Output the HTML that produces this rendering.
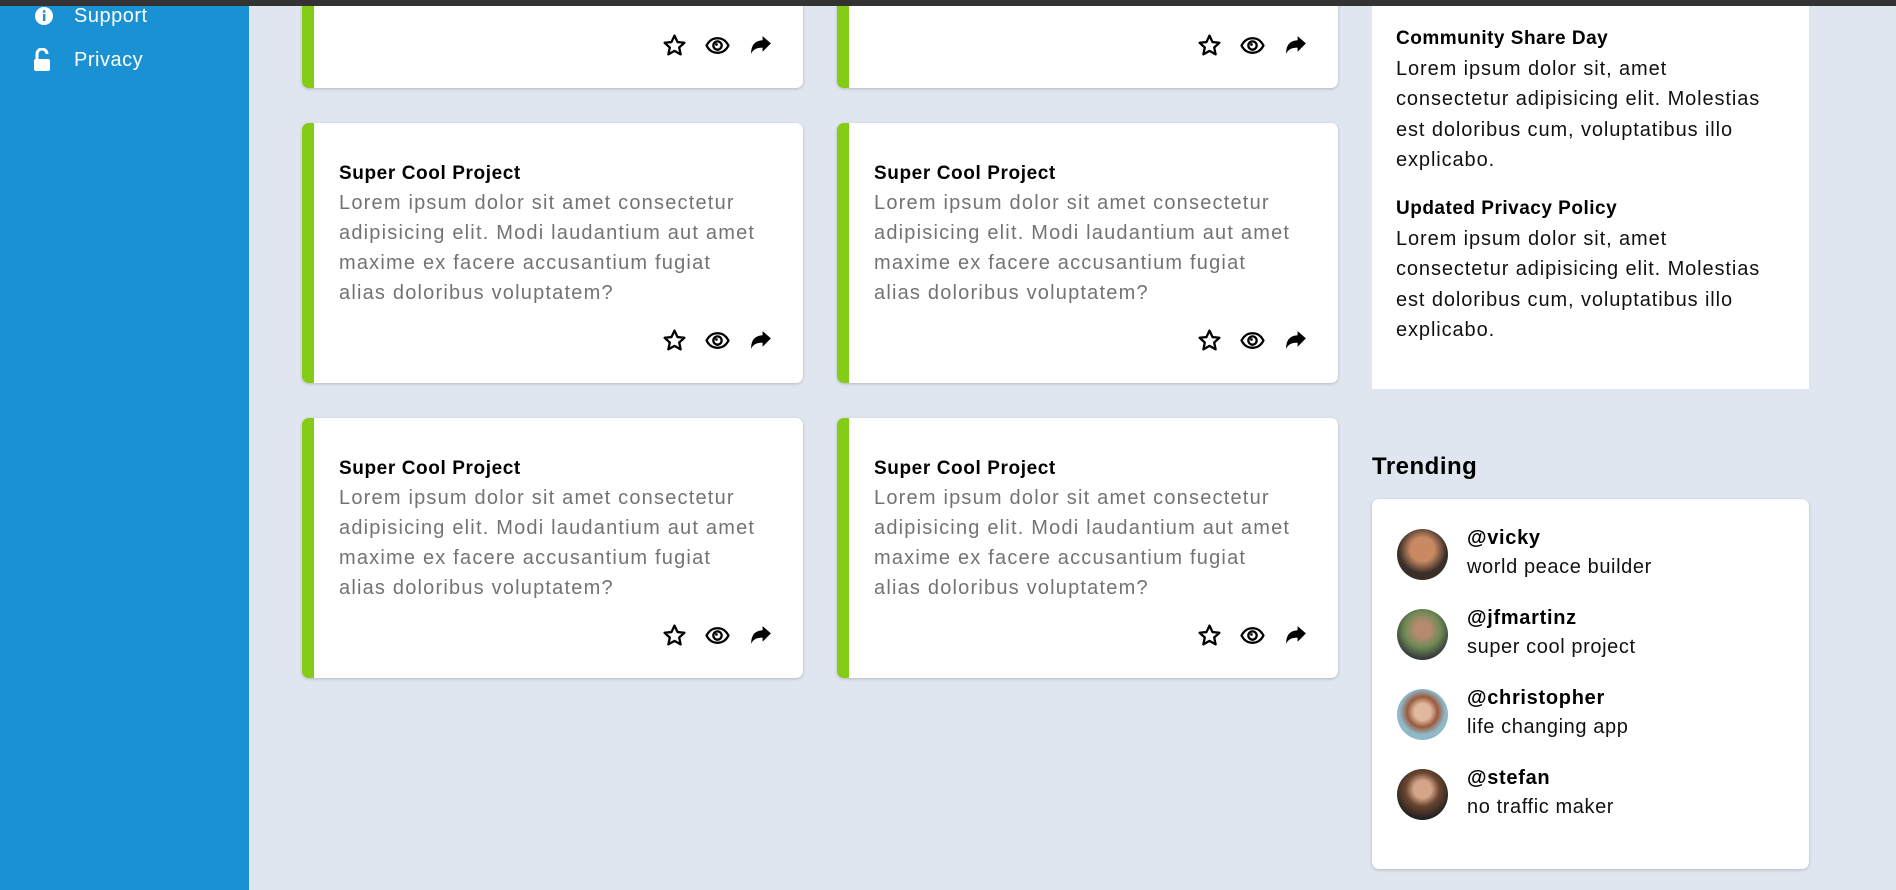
<!DOCTYPE html>
<html><head><meta charset="utf-8"><style>
*{margin:0;padding:0;box-sizing:border-box}
body{width:1896px;height:890px;overflow:hidden;background:#e0e6ef;font-family:"Liberation Sans",sans-serif;position:relative}
.top{position:absolute;left:0;top:0;width:1896px;height:6px;background:#333;z-index:10}
.side{position:absolute;left:0;top:6px;width:249px;height:884px;background:#1a91d2;color:#fff}
.nav{position:absolute;left:74px;font-size:20px;letter-spacing:.5px}
.card{position:absolute;width:501px;background:#fff;border-radius:7px;box-shadow:0 1px 3px rgba(0,0,0,.2);border-left:12px solid #84cc16}
.card h3{position:absolute;left:25px;top:40px;font-size:19px;font-weight:bold;color:#000;letter-spacing:.6px}
.card p{position:absolute;left:25px;top:65px;white-space:nowrap;font-size:20px;line-height:30px;color:#737373;letter-spacing:1.2px}
.icons{position:absolute;right:30px;bottom:30px;display:flex;gap:18px}
.icons svg{width:25px;height:25px}
.panel{position:absolute;left:1372px;top:0;width:437px;height:389px;background:#fff}
.panel h4{position:absolute;left:24px;font-size:19px;font-weight:bold;letter-spacing:.5px}
.panel p{position:absolute;left:24px;white-space:nowrap;font-size:20px;line-height:30.3px;color:#111;letter-spacing:.9px}
.trend{position:absolute;left:1372px;top:499px;width:437px;height:370px;background:#fff;border-radius:7px;box-shadow:0 1px 3px rgba(0,0,0,.2)}
.av{position:absolute;left:25px;width:51px;height:51px;border-radius:50%}
.nm{position:absolute;left:95px;font-size:20px;font-weight:bold;letter-spacing:.7px}
.ds{position:absolute;left:95px;font-size:20px;color:#111;letter-spacing:.6px}
</style></head><body>
<div class="top"></div>
<div class="side">
<svg style="position:absolute;left:34px;top:0px" width="20" height="20" viewBox="0 0 20 20"><circle cx="10" cy="10" r="9" fill="#fff"/><rect x="9" y="8" width="2.4" height="7" fill="#1a91d2"/><circle cx="10.2" cy="5.5" r="1.4" fill="#1a91d2"/></svg>
<div class="nav" style="top:-1px">Support</div>
<svg style="position:absolute;left:33px;top:42px" width="18" height="24" viewBox="0 0 18 24"><path d="M4 11V6a5 5 0 0 1 10 0" stroke="#fff" stroke-width="3" fill="none"/><rect x="1" y="11" width="16" height="12" rx="2" fill="#fff"/></svg>
<div class="nav" style="top:43px">Privacy</div>
</div>

<div class="card" style="left:302px;top:-200px;height:288px"><div class="icons">ICONS</div></div>
<div class="card" style="left:837px;top:-200px;height:288px"><div class="icons">ICONS</div></div>
<div class="card" style="left:302px;top:123px;height:260px"><h3>Super Cool Project</h3><p>Lorem ipsum dolor sit amet consectetur<br>adipisicing elit. Modi laudantium aut amet<br>maxime ex facere accusantium fugiat<br>alias doloribus voluptatem?</p><div class="icons">ICONS</div></div>
<div class="card" style="left:837px;top:123px;height:260px"><h3>Super Cool Project</h3><p>Lorem ipsum dolor sit amet consectetur<br>adipisicing elit. Modi laudantium aut amet<br>maxime ex facere accusantium fugiat<br>alias doloribus voluptatem?</p><div class="icons">ICONS</div></div>
<div class="card" style="left:302px;top:418px;height:260px"><h3>Super Cool Project</h3><p>Lorem ipsum dolor sit amet consectetur<br>adipisicing elit. Modi laudantium aut amet<br>maxime ex facere accusantium fugiat<br>alias doloribus voluptatem?</p><div class="icons">ICONS</div></div>
<div class="card" style="left:837px;top:418px;height:260px"><h3>Super Cool Project</h3><p>Lorem ipsum dolor sit amet consectetur<br>adipisicing elit. Modi laudantium aut amet<br>maxime ex facere accusantium fugiat<br>alias doloribus voluptatem?</p><div class="icons">ICONS</div></div>

<div class="panel">
<h4 style="top:28px">Community Share Day</h4>
<p style="top:54px">Lorem ipsum dolor sit, amet<br>consectetur adipisicing elit. Molestias<br>est doloribus cum, voluptatibus illo<br>explicabo.</p>
<h4 style="top:198px">Updated Privacy Policy</h4>
<p style="top:224px">Lorem ipsum dolor sit, amet<br>consectetur adipisicing elit. Molestias<br>est doloribus cum, voluptatibus illo<br>explicabo.</p>
</div>
<div style="position:absolute;left:1372px;top:453px;font-size:24px;font-weight:bold;letter-spacing:.5px">Trending</div>
<div class="trend">
<div class="av" style="top:30px;background:radial-gradient(circle at 50% 40%,#c98a63 0 30%,#3a2e28 60%)"></div>
<div class="nm" style="top:28px">@vicky</div><div class="ds" style="top:57px">world peace builder</div>
<div class="av" style="top:110px;background:radial-gradient(circle at 50% 40%,#b58a70 0 20%,#6f8a55 45%,#2a2a35 80%)"></div>
<div class="nm" style="top:108px">@jfmartinz</div><div class="ds" style="top:137px">super cool project</div>
<div class="av" style="top:190px;background:radial-gradient(circle at 50% 45%,#e0b8a0 0 22%,#9b5a3c 40%,#8fb8c8 60%)"></div>
<div class="nm" style="top:188px">@christopher</div><div class="ds" style="top:217px">life changing app</div>
<div class="av" style="top:270px;background:radial-gradient(circle at 50% 40%,#d4a58a 0 22%,#6b4630 42%,#202020 75%)"></div>
<div class="nm" style="top:268px">@stefan</div><div class="ds" style="top:297px">no traffic maker</div>
</div>
<script>
var ic='<svg viewBox="0 0 24 24"><path d="M12 2.5l2.9 6.2 6.6.7-5 4.5 1.4 6.6L12 17.2l-5.9 3.3 1.4-6.6-5-4.5 6.6-.7z" fill="none" stroke="#000" stroke-width="2.2" stroke-linejoin="round"/></svg>'+
'<svg viewBox="0 0 24 24"><path d="M1.5 12C4 7 8 5 12 5s8 2 10.5 7C20 17 16 19 12 19S4 17 1.5 12z" fill="none" stroke="#000" stroke-width="2.2"/><circle cx="12" cy="12" r="4" fill="none" stroke="#000" stroke-width="2.2"/><circle cx="11" cy="11" r="1.3"/></svg>'+
'<svg viewBox="0 0 24 24"><path d="M22 10l-8-7v4C7 7.5 3 11 3 20c2-4.5 5.5-6 11-6v4z"/></svg>';
document.querySelectorAll('.icons').forEach(function(e){e.innerHTML=ic});
</script>
</body></html>
